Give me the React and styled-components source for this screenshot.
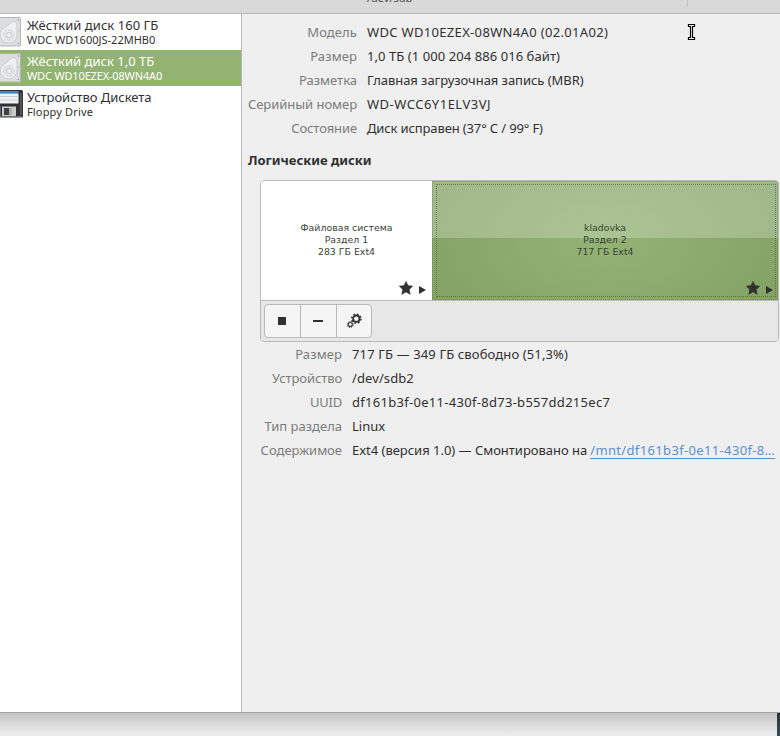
import React from 'react';
import styled, { createGlobalStyle } from 'styled-components';

const disks = [
  { icon: 'hdd', name: 'Жёсткий диск 160 ГБ', model: 'WDC WD1600JS-22MHB0', nameGap: 0.04, modelGap: 0 },
  { icon: 'hdd', name: 'Жёсткий диск 1,0 ТБ', model: 'WDC WD10EZEX-08WN4A0', nameGap: 0, modelGap: -0.16, active: true },
  { icon: 'floppy', name: 'Устройство Дискета', model: 'Floppy Drive', nameGap: -0.04, modelGap: 0.16 },
];

const driveInfo = [
  { label: 'Модель', value: 'WDC WD10EZEX-08WN4A0 (02.01A02)', labelGap: 0.1, gap: 0.33 },
  { label: 'Размер', value: '1,0 ТБ (1 000 204 886 016 байт)', labelGap: 0.1, gap: 0.07 },
  { label: 'Разметка', value: 'Главная загрузочная запись (MBR)', labelGap: 0, gap: -0.05 },
  { label: 'Серийный номер', value: 'WD-WCC6Y1ELV3VJ', labelGap: -0.04, gap: 0.5 },
  { label: 'Состояние', value: 'Диск исправен (37° C / 99° F)', labelGap: -0.1, gap: -0.13 },
];

const volumeInfo = [
  { label: 'Размер', value: '717 ГБ — 349 ГБ свободно (51,3%)', labelGap: 0.1, gap: 0.13 },
  { label: 'Устройство', value: '/dev/sdb2', labelGap: -0.1, gap: 0.1 },
  { label: 'UUID', value: 'df161b3f-0e11-430f-8d73-b557dd215ec7', labelGap: -0.2, gap: 0.29 },
  { label: 'Тип раздела', value: 'Linux', labelGap: 0, gap: 0 },
  { label: 'Содержимое', value: 'Ext4 (версия 1.0) — Смонтировано на', link: '/mnt/df161b3f-0e11-430f-8…', labelGap: 0, gap: -0.02, linkGap: 0.35 },
];

const HddIcon = () => (
  <svg width="23" height="32" viewBox="0 0 23 32">
    <rect x="-8" y="1.500" width="28.500" height="28.500" rx="1" fill="#dddedf" stroke="#b3b5b5" />
    <path d="M13.500 5.500c2.200 0 3.500 1.500 3.500 3.500v9.500a8.300 8.300 0 1 1-15-4.700l8.200-6.500c1-1 2-1.800 3.300-1.800z" fill="#eff0f3" stroke="#c9cbcd" />
    <circle cx="9" cy="19" r="5.500" fill="#e3e5e8" stroke="#d8dadc" />
    <circle cx="9" cy="19" r="2.600" fill="#f1f2f4" stroke="#c9cbcd" />
    <circle cx="18.300" cy="4" r=".7" fill="#8b8d8e" />
    <circle cx="18.600" cy="15" r=".6" fill="#a3a5a6" />
    <circle cx="18.300" cy="27.500" r=".7" fill="#8b8d8e" />
  </svg>
);

const FloppyIcon = () => (
  <svg width="23" height="32" viewBox="0 0 23 32">
    <path d="M0 2h21.500a1.500 1.500 0 0 1 1.500 1.500V29.500H0z" fill="#2e3234" />
    <path d="M0 3h18.500v2.500H0z" fill="#4484c4" />
    <path d="M0 5.500h18.500V15.500H0z" fill="#f0f1f1" />
    <path d="M0 8.500h18.500M0 12h18.500" stroke="#c9cbcc" />
    <path d="M0 18v10" stroke="#8b8f90" />
    <path d="M2 18.500h14v9.500H2z" fill="#c9cbc8" />
    <path d="M4 20h5v7H4z" fill="#3e4244" />
    <path d="M9 20h3v7H9z" fill="#a9aca9" />
    <path d="M21 5v22" stroke="#74797b" />
    <path d="M0 28.500h22" stroke="#6d7172" />
  </svg>
);

const StarIcon = () => (
  <svg width="14" height="14" viewBox="0 0 14 14">
    <path d="M7 .2l2.100 4.300 4.700.6-3.400 3.400.9 4.900L7 11.100l-4.300 2.300.9-4.900L.2 5.100l4.700-.6z" fill="#2f3330" stroke="#2f3330" strokeWidth=".4" />
  </svg>
);

const PlayIcon = () => (
  <svg width="7" height="8" viewBox="0 0 7 8">
    <path d="M0 0l7 4-7 4z" fill="#2f3330" />
  </svg>
);

const GearsIcon = () => (
  <svg width="16" height="16" viewBox="0 0 16 16" fill="none" stroke="#2f3330">
    <circle cx="10.300" cy="5.700" r="3.200" strokeWidth="1.800" />
    <circle cx="10.300" cy="5.700" r="4.600" strokeWidth="1.500" strokeDasharray="1.800 1.813" />
    <circle cx="4.300" cy="11.500" r="2" strokeWidth="1.100" />
    <circle cx="4.300" cy="11.500" r="3" strokeWidth="1" strokeDasharray="1.150 1.206" />
  </svg>
);

const TextCursor = () => (
  <svg width="9" height="18" viewBox="0 0 9 18">
    <path d="M1.500 1.500h6v2H5.500v11h2v2h-6v-2h2v-11h-2z" fill="#fff" stroke="#000" strokeWidth="1.200" />
  </svg>
);

const InfoTable = ({ rows, labelWidth }) => (
  <Info $labelWidth={labelWidth}>
    {rows.map(row => (
      <React.Fragment key={row.label}>
        <Label><Line $gap={row.labelGap}>{row.label}</Line></Label>
        <Value>
          <Line $gap={row.gap}>{row.value}</Line>
          {row.link && <Link $gap={row.linkGap}>{row.link}</Link>}
        </Value>
      </React.Fragment>
    ))}
  </Info>
);

const App = () => (
  <Screen>
    <GlobalStyle />
    <TitleBar>
      <Subtitle>/dev/sdb</Subtitle>
      <Separator />
    </TitleBar>
    <Body>
      <Sidebar>
        {disks.map(disk => (
          <Disk key={disk.name} $active={disk.active}>
            {disk.icon === 'hdd' ? <HddIcon /> : <FloppyIcon />}
            <DiskText>
              <DiskName $gap={disk.nameGap}>{disk.name}</DiskName>
              <DiskModel $gap={disk.modelGap}>{disk.model}</DiskModel>
            </DiskText>
          </Disk>
        ))}
      </Sidebar>
      <Details>
        <InfoTable rows={driveInfo} labelWidth={109} />
        <Heading>Логические диски</Heading>
        <Volumes>
          <VolumeMap>
            <Partition>
              <span>Файловая система</span>
              <span>Раздел 1</span>
              <span>283 ГБ Ext4</span>
              <Marks $right={6}><StarIcon /><PlayIcon /></Marks>
            </Partition>
            <Partition $selected>
              <span>kladovka</span>
              <span>Раздел 2</span>
              <span>717 ГБ Ext4</span>
              <Marks $right={5}><StarIcon /><PlayIcon /></Marks>
            </Partition>
          </VolumeMap>
          <Toolbar>
            <ButtonGroup>
              <Button aria-label="stop"><StopMark /></Button>
              <Button aria-label="remove"><MinusMark /></Button>
              <Button aria-label="settings"><GearsIcon /></Button>
            </ButtonGroup>
          </Toolbar>
        </Volumes>
        <InfoTable rows={volumeInfo} labelWidth={94} />
        <Pointer><TextCursor /></Pointer>
      </Details>
    </Body>
    <Below>
      <Shadow />
      <Desktop />
    </Below>
  </Screen>
);

export default App;

const GlobalStyle = createGlobalStyle`
  body {
    margin: 0;
    background: #efefef;
  }
  * {
    box-sizing: border-box;
  }
`;

const Screen = styled.div`
  width: 780px;
  height: 736px;
  display: flex;
  flex-direction: column;
  overflow: hidden;
  color: #303030;
  font-family: 'Noto Sans', 'Open Sans', sans-serif;
  font-size: 13px;
`;

const TitleBar = styled.header`
  height: 14px;
  flex: none;
  display: flex;
  align-items: flex-end;
  overflow: hidden;
  background: #d9d9d9;
  border-bottom: 1px solid #b9b9b9;
`;

const Subtitle = styled.div`
  width: 320px;
  padding-left: 367px;
  padding-bottom: 8px;
  box-sizing: content-box;
  font-size: 11px;
  line-height: 15px;
  height: 15px;
  color: #4a4a4a;
`;

const Separator = styled.div`
  width: 1px;
  height: 7px;
  margin-bottom: 6px;
  background: #c2c2c2;
`;

const Body = styled.main`
  height: 699px;
  flex: none;
  display: flex;
  border-bottom: 1px solid #a3a3a3;
`;

const Sidebar = styled.aside`
  width: 242px;
  flex: none;
  background: #fff;
  border-right: 1px solid #b9b9b9;
`;

const Disk = styled.div`
  height: 36px;
  display: flex;
  align-items: center;
  gap: 4px;
  color: ${({ $active }) => ($active ? '#fff' : '#303030')};
  background: ${({ $active }) => ($active ? '#93b373' : '#fff')};
`;

const DiskText = styled.div`
  display: flex;
  flex-direction: column;
`;

const Line = styled.span`
  white-space: nowrap;
  letter-spacing: ${({ $gap }) => $gap || 0}px;
`;

const DiskName = styled(Line)`
  height: 15px;
  line-height: 15px;
`;

const DiskModel = styled(Line)`
  font-size: 11px;
  height: 14px;
  line-height: 14px;
`;

const Details = styled.section`
  position: relative;
  width: 538px;
  padding-top: 6px;
  background: #efefef;
`;

const Info = styled.div`
  display: grid;
  grid-template-columns: ${({ $labelWidth }) => $labelWidth}px 1fr;
  grid-auto-rows: 24px;
  column-gap: 10px;
  padding-left: 6px;
  line-height: 24px;
`;

const Label = styled.div`
  display: flex;
  justify-content: flex-end;
  color: #7b7b7b;
`;

const Value = styled.div`
  display: flex;
  gap: 3px;
`;

const Link = styled(Line)`
  height: 17px;
  margin-top: 4px;
  line-height: 16px;
  color: #5a8fd0;
  border-bottom: 1px solid #5a8fd0;
`;

const Heading = styled.h2`
  margin: 8px 0 7px 6px;
  font-size: 13px;
  font-weight: bold;
  line-height: 25px;
`;

const Volumes = styled.div`
  width: 519px;
  height: 162px;
  margin-left: 18px;
  overflow: hidden;
  border: 1px solid #b9b9b9;
  border-radius: 4px;
`;

const VolumeMap = styled.div`
  height: 119px;
  display: grid;
  grid-template-columns: 171px 1fr;
`;

const Partition = styled.div`
  position: relative;
  display: flex;
  flex-direction: column;
  align-items: center;
  justify-content: center;
  padding-bottom: 2px;
  font-family: 'DejaVu Sans', sans-serif;
  font-size: 9.4px;
  line-height: 12px;
  color: #3b3f38;
  background: ${({ $selected }) => ($selected
    ? 'linear-gradient(rgba(255, 255, 255, .23) 57px, transparent 57px), radial-gradient(ellipse 260px 150px at 50% 50%, #93b373, #7f9c62)'
    : '#fff')};
  box-shadow: ${({ $selected }) => ($selected ? 'inset 0 0 0 1px rgba(110, 140, 85, .35)' : 'none')};

  &::after {
    content: '';
    display: ${({ $selected }) => ($selected ? 'block' : 'none')};
    position: absolute;
    inset: 3px 2px 3px 4px;
    border: 1px dotted rgba(60, 90, 40, .6);
  }
`;

const Marks = styled.div`
  position: absolute;
  right: ${({ $right }) => $right}px;
  bottom: 5px;
  display: flex;
  align-items: flex-end;
  gap: 6px;

  svg:last-child {
    margin-bottom: 1px;
  }
`;

const Toolbar = styled.div`
  height: 41px;
  padding: 3px;
  background: #e7e7e7;
  border-top: 1px solid #b9b9b9;
`;

const ButtonGroup = styled.div`
  width: 108px;
  height: 34px;
  display: flex;
  overflow: hidden;
  background: #f5f5f5;
  border: 1px solid #b9b9b9;
  border-radius: 4px;
`;

const Button = styled.button`
  width: 36px;
  padding: 0 1px 0 0;
  display: flex;
  align-items: center;
  justify-content: center;
  background: none;
  border: none;
  border-right: 1px solid #b9b9b9;

  &:last-child {
    border-right: none;
    width: 34px;
    padding: 0;
  }
`;

const StopMark = styled.span`
  width: 8px;
  height: 8px;
  background: #2f3330;
`;

const MinusMark = styled.span`
  width: 10px;
  height: 2px;
  background: #2f3330;
`;

// mouse pointer resting over the details pane
const Pointer = styled.div`
  position: absolute;
  left: 445px;
  top: 9px;
`;

const Below = styled.div`
  flex: 1;
  display: flex;
`;

const Shadow = styled.div`
  flex: 1;
  background: linear-gradient(#c4c4c4, #d8d8d8 45%, #eaeaea 90%);
`;

const Desktop = styled.div`
  width: 3px;
  background: linear-gradient(#26323a, #38505e);
`;
